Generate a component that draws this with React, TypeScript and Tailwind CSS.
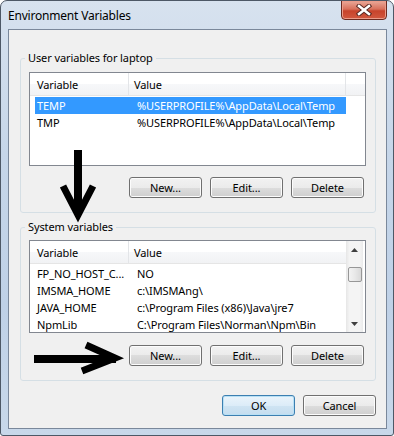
import React from 'react'

const userRows = [
	['TEMP', '%USERPROFILE%\\AppData\\Local\\Temp'],
	['TMP', '%USERPROFILE%\\AppData\\Local\\Temp'],
]

const systemRows = [
	['FP_NO_HOST_C...', 'NO'],
	['IMSMA_HOME', 'c:\\IMSMAng\\'],
	['JAVA_HOME', 'c:\\Program Files (x86)\\Java\\jre7'],
	['NpmLib', 'C:\\Program Files\\Norman\\Npm\\Bin'],
]

function Btn({ label, isDefault }: { label: string, isDefault?: boolean }) {
	return (
		<button
			className={
				isDefault
					? 'w-[73px] h-[21px] rounded-[3px] border border-[#3c7fb1] bg-[linear-gradient(#eaf4fb,#dcecf8_50%,#cfe4f3_50%,#c4ddef)] shadow-[inset_0_0_0_1px_#b8e0f5] text-[11px] leading-[19px] text-black'
					: 'w-[73px] h-[21px] rounded-[3px] border border-[#707070] bg-[linear-gradient(#f2f2f2,#ebebeb_50%,#dddddd_50%,#cfcfcf)] shadow-[inset_0_0_0_1px_#fcfcfc] text-[11px] leading-[19px] text-black'
			}
		>
			{label}
		</button>
	)
}

function Header() {
	return (
		<div className="flex h-[23px] bg-[linear-gradient(#ffffff,#ffffff_50%,#f7f8fa_50%,#f1f2f4)] border-b border-[#e5e5e5]">
			<div className="w-[99px] shrink-0 pl-[7px] leading-[23px] border-r border-[#e3e5e8]">Variable</div>
			<div className="w-[217px] shrink-0 pl-[5px] leading-[23px] border-r border-[#e3e5e8]">Value</div>
		</div>
	)
}

function Rows({ rows, selected }: { rows: string[][], selected?: number }) {
	return (
		<div className="flex flex-col mt-[1px] ml-[5px] w-[311px]">
			{rows.map((r, i) => (
				<div
					key={i}
					className={i === selected ? 'flex h-[17px] leading-[17px] bg-[#3399ff] text-white' : 'flex h-[17px] leading-[17px]'}
				>
					<div className="w-[100px] shrink-0 pl-[2px] whitespace-nowrap overflow-hidden">{r[0]}</div>
					<div className="pl-[2px] whitespace-nowrap">{r[1]}</div>
				</div>
			))}
		</div>
	)
}

function ScrollBar() {
	return (
		<div className="w-[17px] shrink-0 h-full flex flex-col items-center bg-[linear-gradient(90deg,#e6e6e6,#f4f4f4_20%,#f4f4f4_80%,#eaeaea)]">
			<div className="h-[17px] flex items-center justify-center">
				<svg width="7" height="4" viewBox="0 0 7 4"><path d="M0 4 L3.5 0 L7 4 Z" fill="#404040" /></svg>
			</div>
			<div className="mt-[9px] w-[14px] h-[15px] rounded-[2px] border border-[#979797] bg-[linear-gradient(90deg,#f3f3f3,#e8e8e8_50%,#d9d9d9)]" />
			<div className="flex-1" />
			<div className="h-[17px] flex items-center justify-center">
				<svg width="7" height="4" viewBox="0 0 7 4"><path d="M0 0 L3.5 4 L7 0 Z" fill="#404040" /></svg>
			</div>
		</div>
	)
}

export default function App() {
	return (
		<div className="relative w-[394px] h-[436px] overflow-hidden rounded-t-[7px] rounded-b-[3px] border border-[#4d5866] bg-[linear-gradient(180deg,#d7e2ef_0%,#c6d6e9_35%,#bfd1e7_70%,#c8d8ea_100%)] [font-family:'Noto_Sans',sans-serif] text-[11px] tracking-[-0.1px] text-black">
			<div className="absolute top-[-1px] right-[6px] w-[46px] h-[20px] rounded-b-[4px] border border-[#6b2a20] bg-[linear-gradient(#eaa999,#d8705b_45%,#c7432b_55%,#d2583f)] shadow-[inset_0_0_0_1px_#eb9c8a] flex items-center justify-center">
				<svg width="16" height="12" viewBox="0 0 16 12">
					<path d="M3 2 L13 10 M13 2 L3 10" stroke="#5a2a24" strokeWidth="4.5" strokeLinecap="square" />
					<path d="M3 2 L13 10 M13 2 L3 10" stroke="#ffffff" strokeWidth="2.5" strokeLinecap="square" />
				</svg>
			</div>

			<div className="h-[28px] pl-[7px] flex items-center">
				<span className="relative text-[12px] tracking-[-0.2px] mt-[2px] text-black">Environment Variables</span>
			</div>

			<div className="ml-[7px] w-[379px] h-[400px] border border-[#7a889b] bg-[#f0f0f0] flex flex-col">
				<fieldset className="mt-[20px] ml-[11px] w-[356px] border border-[#d5dfe5] rounded-[3px] pb-[14px]">
					<legend className="ml-[4px] px-[3px] leading-[16px]">User variables for laptop</legend>
					<div className="mt-[6px] ml-[8px] w-[337px] h-[94px] border border-[#828790] bg-white">
						<Header />
						<Rows rows={userRows} selected={0} />
					</div>
					<div className="mt-[11px] ml-[108px] flex gap-[8px]">
						<Btn label="New..." />
						<Btn label="Edit..." />
						<Btn label="Delete" />
					</div>
				</fieldset>

				<fieldset className="mt-[6px] ml-[11px] w-[356px] border border-[#d5dfe5] rounded-[3px] pb-[14px]">
					<legend className="ml-[4px] px-[3px] leading-[16px]">System variables</legend>
					<div className="mt-[5px] ml-[8px] w-[337px] h-[93px] border border-[#828790] bg-white flex overflow-hidden">
						<div className="w-[316px] shrink-0">
							<div className="flex h-[23px] bg-[linear-gradient(#ffffff,#ffffff_50%,#f7f8fa_50%,#f1f2f4)] border-b border-[#e5e5e5]">
								<div className="w-[99px] shrink-0 pl-[7px] leading-[23px] border-r border-[#e3e5e8]">Variable</div>
								<div className="flex-1 pl-[5px] leading-[23px]">Value</div>
							</div>
							<Rows rows={systemRows} />
						</div>
						<ScrollBar />
					</div>
					<div className="mt-[12px] ml-[108px] flex gap-[8px]">
						<Btn label="New..." />
						<Btn label="Edit..." />
						<Btn label="Delete" />
					</div>
				</fieldset>

				<div className="mt-[14px] mr-[10px] flex justify-end gap-[8px]">
					<Btn label="OK" isDefault />
					<Btn label="Cancel" />
				</div>
			</div>

			<svg className="absolute left-0 top-0 pointer-events-none" width="394" height="436" viewBox="0 0 394 436">
				<rect x="73" y="149" width="8" height="60" fill="#000" />
				<polyline points="62,185 77,214 92,185" fill="none" stroke="#000" strokeWidth="7" strokeLinejoin="miter" strokeMiterlimit="10" />
				<rect x="33" y="354" width="82" height="8" fill="#000" />
				<polyline points="85,344 114,357 81,370" fill="none" stroke="#000" strokeWidth="7" strokeLinejoin="miter" strokeMiterlimit="10" />
			</svg>
		</div>
	)
}
